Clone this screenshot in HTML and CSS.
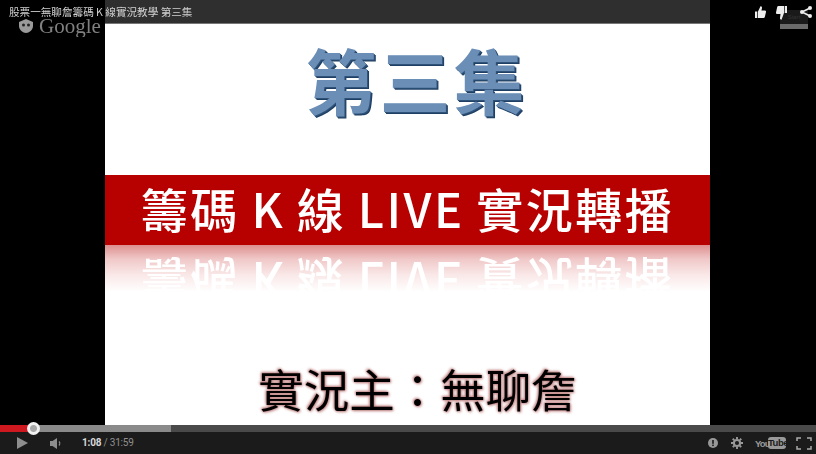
FILE: index.html
```html
<!DOCTYPE html>
<html lang="zh-Hant">
<head>
<meta charset="utf-8">
<title>股票一無聊詹籌碼 K 線實況教學 第三集</title>
<link rel="stylesheet" href="styles.css">
</head>
<body>
<div class="player">
  <div class="stage">
    <div class="slide">
      <div class="slide-title">第三集</div>
      <div class="band"><span>籌碼 K 線 LIVE 實況轉播</span></div>
      <div class="mirror"><span>籌碼 K 線 LIVE 實況轉播</span></div>
      <div class="host">實況主：無聊詹</div>
    </div>
    <div class="watermark">
      <svg class="wm-icon" viewBox="0 0 16 16"><path d="M1 4 8 1l7 3v4c0 4-4 7-7 7S1 12 1 8z" fill="#9a9a9a"/><circle cx="5.500" cy="7" r="1.500" fill="#222"/><circle cx="10.500" cy="7" r="1.500" fill="#222"/></svg>
      <span>Google</span>
    </div>
    <div class="titlebar"><span class="titletext">股票一無聊詹籌碼 K 線實況教學 第三集</span></div>
    <div class="start-btn"><span>Start</span></div>
    <div class="actions">
      <svg class="act" viewBox="0 0 11 12"><path d="M0 5.500h2.300V12H0zM3 5.500 5.500 0.300c1.300 0 1.800 1 1.400 2.300L6.400 4.500H10c.8 0 1.200.7 1 1.400l-1.200 5c-.2.700-.6 1.100-1.200 1.100H3z" fill="#eee"/></svg>
      <svg class="act dislike" viewBox="0 0 11 14"><path d="M11 7H8.700V0H11zM8 7 5.500 13.700c-1.300 0-1.800-1.200-1.400-2.500L4.600 8H1C.2 8-.2 7.300 0 6.600L1.200 1.100C1.400.4 1.800 0 2.400 0H8z" fill="#eee"/></svg>
      <svg class="act share" viewBox="0 0 12 12"><path d="M10 2 2 6l8 4" fill="none" stroke="#eee" stroke-width="1.600"/><circle cx="10" cy="2" r="2" fill="#eee"/><circle cx="2" cy="6" r="2" fill="#eee"/><circle cx="10" cy="10" r="2" fill="#eee"/></svg>
    </div>
  </div>
  <div class="progress">
    <div class="played"></div>
    <div class="loaded"></div>
    <div class="thumb"></div>
  </div>
  <div class="controls">
    <svg class="play" viewBox="0 0 11 12"><path d="M0 0 11 6 0 12z" fill="#8e8e8e"/></svg>
    <svg class="vol" viewBox="0 0 12 11"><path d="M0 3h2.500L7 0v11L2.500 8H0z" fill="#8e8e8e"/><path d="M9 3.500c1 1 1 3 0 4" fill="none" stroke="#8e8e8e" stroke-width="1.200"/></svg>
    <div class="time"><b>1:08</b> / 31:59</div>
    <div class="spacer"></div>
    <svg class="info" viewBox="0 0 10 10"><circle cx="5" cy="5" r="5" fill="#999"/><rect x="4.200" y="2" width="1.600" height="3.800" fill="#1b1b1b"/><rect x="4.200" y="6.600" width="1.600" height="1.500" fill="#1b1b1b"/></svg>
    <svg class="gear" viewBox="0 0 14 14"><circle cx="7" cy="7" r="3.600" fill="none" stroke="#999" stroke-width="2.400"/><path d="M7 0v14M0 7h14M2 2l10 10M12 2 2 12" stroke="#999" stroke-width="2.200" stroke-dasharray="2.400 9.200 2.400"/></svg>
    <div class="yt"><span class="you">You</span><span class="tube">Tube</span></div>
    <svg class="fs" viewBox="0 0 16 13"><path d="M1 4V1h4M11 1h4v3M15 9v3h-4M5 12H1V9" fill="none" stroke="#aaa" stroke-width="1.500"/></svg>
  </div>
</div>
</body>
</html>
```
FILE: styles.css
```css
* { box-sizing: border-box; }
html, body { margin: 0; height: 100%; background: #000; overflow: hidden; }
.player { width: 816px; height: 454px; display: flex; flex-direction: column; font-family: "Liberation Sans", "Noto Sans CJK TC", sans-serif; }
.stage { position: relative; height: 425px; background: #000; display: flex; justify-content: center; padding-right: 1px; overflow: hidden; }
.slide { width: 605px; height: 425px; background: #fff; display: flex; flex-direction: column; align-items: center; font-family: "Noto Sans CJK TC", sans-serif; padding-top: 37px; filter: blur(0.4px); }
.slide-title { height: 90px; margin-top: -4px; margin-bottom: 4px; margin-left: 18px; font-size: 71px; line-height: 90px; font-weight: 700; color: #6a8eb6; letter-spacing: 3px; text-shadow: 1px 1px 0 #2f5278, 2px 2px 0 #1f3f64; }
.band, .mirror { width: 100%; color: #fff; font-size: 47px; line-height: 66px; font-weight: 500; letter-spacing: 2.500px; word-spacing: -1.500px; text-align: center; white-space: nowrap; overflow: hidden; }
.band { margin-top: 48px; height: 70px; background: #b70000; }
.mirror { height: 47px; background: linear-gradient(#dd8f8f 0, #f0c8c8 14px, #fae8e8 30px, #fff 47px); }
.mirror span { display: block; height: 70px; transform: scaleY(-1); }
.host { margin-top: 68px; margin-left: 20px; font-size: 45.500px; line-height: 56px; font-weight: 400; color: #000; text-shadow: 0 0 2px #b87878, 1px 1px 3px #c48a8a, -1px -1px 3px #c48a8a; white-space: nowrap; }
.titlebar { position: absolute; left: 0; top: 0; width: 710px; height: 24px; padding: 4px 0 0 9px; background: linear-gradient(to right, transparent 105px, #2f2f2f 105px) 0 0 / 100% 23px no-repeat, linear-gradient(to right, transparent 105px, #777 105px); font-family: "Noto Sans CJK TC", sans-serif; }
.titletext { color: #d0d0d0; font-size: 10.600px; line-height: 16px; white-space: nowrap; display: block; filter: blur(0.3px); }
.watermark { position: absolute; left: 18px; top: 15px; display: flex; align-items: center; gap: 5px; color: #808080; font-family: "Liberation Serif", serif; font-size: 21px; line-height: 22px; width: 87px; overflow: hidden; filter: blur(0.4px); }
.wm-icon { width: 16px; height: 16px; flex: none; }
.start-btn { position: absolute; left: 780px; top: 10px; width: 28px; height: 19px; background: #1a1a1a; border-bottom: 5px solid #6a6a6a; color: #333; font-size: 6px; text-align: center; line-height: 14px; }
.actions { position: absolute; left: 755px; top: 6px; display: flex; gap: 10px; align-items: flex-start; }
.act { width: 11px; height: 12px; display: block; }
.act.dislike { height: 14px; }
.act.share { width: 12px; margin-left: 3px; }
.progress { position: relative; height: 7px; background: #4a4a4a; display: flex; }
.played { width: 28px; background: #cc181e; }
.loaded { width: 143px; background: #8a8a8a; }
.thumb { position: absolute; left: 27px; top: -3px; width: 13px; height: 13px; border-radius: 50%; background: radial-gradient(circle, #a8a8a8 0 3px, #f2f2f2 4px); }
.controls { height: 22px; background: #1b1b1b; display: flex; align-items: center; color: #999; }
.play { width: 11px; height: 12px; margin-left: 17px; flex: none; }
.vol { width: 12px; height: 11px; margin-left: 22px; flex: none; }
.time { margin-left: 20px; font-size: 10px; line-height: 14px; letter-spacing: -0.200px; white-space: nowrap; color: #8f8f8f; font-family: "Roboto", "Liberation Sans", sans-serif; }
.time b { color: #d8d8d8; font-weight: 700; }
.spacer { flex: 1; }
.info { width: 10px; height: 10px; flex: none; margin-right: 13px; }
.gear { width: 12px; height: 12px; flex: none; margin-right: 12px; }
.yt { display: flex; align-items: center; font-family: "Liberation Sans", sans-serif; font-size: 9.500px; font-weight: 700; width: 31px; margin-right: 10px; white-space: nowrap; }
.you { color: #999; width: 13px; letter-spacing: -0.900px; flex: none; }
.tube { background: #999; color: #1b1b1b; border-radius: 3px; width: 18px; text-align: center; letter-spacing: -0.500px; line-height: 12px; flex: none; }
.fs { width: 16px; height: 13px; flex: none; margin-right: 4px; }
```
